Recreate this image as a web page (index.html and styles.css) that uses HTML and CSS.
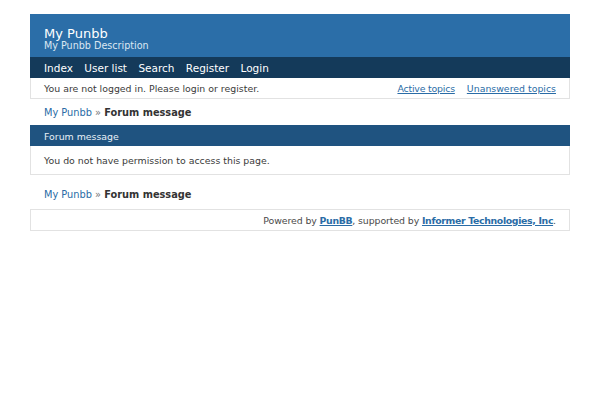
FILE: index.html
```html
<!DOCTYPE html>
<html>
<head>
<meta charset="utf-8">
<link rel="stylesheet" href="styles.css">
</head>
<body>
<div class="board">
  <div class="head">
    <div class="title">My Punbb</div>
    <div class="desc">My Punbb Description</div>
  </div>
  <div class="nav">
    <span>Index</span><span>User list</span><span>Search</span><span>Register</span><span>Login</span>
  </div>
  <div class="status">
    <span>You are not logged in. Please login or register.</span>
    <span class="status-links"><a href="#" class="active-link">Active topics</a><a href="#">Unanswered topics</a></span>
  </div>
  <div class="crumbs"><span><a href="#">My Punbb</a> <span class="sep">»</span> <strong>Forum message</strong></span></div>
  <div class="panel">
    <div class="panel-head">Forum message</div>
    <div class="panel-body">You do not have permission to access this page.</div>
  </div>
  <div class="crumbs crumbs-bottom"><span><a href="#">My Punbb</a> <span class="sep">»</span> <strong>Forum message</strong></span></div>
  <div class="foot"><span>Powered by <a href="#"><strong>PunBB</strong></a>, supported by <a href="#"><strong>Informer Technologies, Inc</strong></a>.</span></div>
</div>
</body>
</html>
```
FILE: styles.css
```css
html, body { margin: 0; padding: 0; background: #fff; }
body {
  font-family: "DejaVu Sans", Verdana, sans-serif;
  font-size: 9.4px;
  color: #3a3a3a;
  padding-top: 14px;
}
.board { width: 540px; margin: 0 auto; }
.head {
  background: #2b6ea8;
  color: #fff;
  height: 43px;
  box-sizing: border-box;
  padding: 13px 14px 0;
}
.title { font-size: 13px; line-height: 13px; }
.desc { font-size: 9.6px; line-height: 12px; color: #dbe7f2; }
.nav {
  background: #143a5a;
  height: 21px;
  display: flex;
  align-items: center;
  padding: 0 14px;
  gap: 11.4px;
  color: #fff;
  font-size: 10.5px;
}
.status {
  height: 20px;
  border: 1px solid #e2e2e2;
  border-top: none;
  display: flex;
  align-items: center;
  justify-content: space-between;
  padding: 0 13px;
}
.status-links { display: flex; gap: 12px; }
.status-links .active-link { letter-spacing: -0.2px; }
a { color: #2a6ca6; text-decoration: underline; }
.crumbs { height: 26px; display: flex; align-items: center; padding: 0 14px; font-size: 9.8px; }
.crumbs a { text-decoration: none; }
.crumbs .sep { color: #777; }
.crumbs strong { color: #333; }
.panel { border: 1px solid #e2e2e2; border-top: none; }
.panel-head {
  background: #1f5380;
  color: #e8f0f7;
  height: 21px;
  margin: 0 -1px;
  display: flex;
  align-items: center;
  padding: 0 14px;
  padding-top: 1px;
  box-sizing: border-box;
}
.panel-body { height: 28px; display: flex; align-items: center; padding: 0 13px; }
.crumbs-bottom { height: 34px; padding-top: 4px; box-sizing: border-box; }
.foot {
  border: 1px solid #e2e2e2;
  height: 20px;
  display: flex;
  align-items: center;
  justify-content: flex-end;
  padding: 0 13px;
  color: #4a4a4a;
}
.foot span { letter-spacing: -0.1px; }
.foot strong { font-weight: bold; letter-spacing: -0.35px; }
```
